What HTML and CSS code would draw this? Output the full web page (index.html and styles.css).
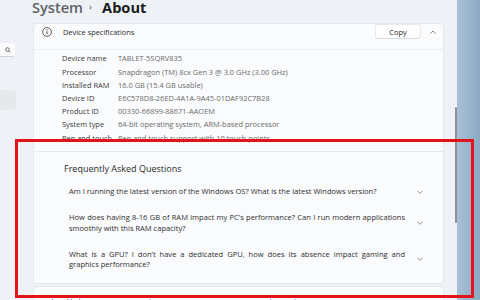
FILE: index.html
```html
<!DOCTYPE html>
<html lang="en">
<head>
<meta charset="utf-8">
<title>System › About</title>
<link rel="stylesheet" href="styles.css">
</head>
<body>
<div class="screen">
  <aside class="side">
    <div class="search">
      <svg width="6" height="6" viewBox="0 0 6 6"><circle cx="2.5" cy="2.5" r="1.8" fill="none" stroke="#555" stroke-width="0.8"/><line x1="3.8" y1="3.8" x2="5.5" y2="5.5" stroke="#555" stroke-width="0.8"/></svg>
    </div>
    <div class="nav-sel"></div>
  </aside>
  <main class="main">
    <div class="content">
      <h1 class="title"><span class="crumb">System</span><span class="sep">›</span><span class="page">About</span></h1>
      <section class="card">
        <div class="card-head">
          <svg class="info" width="10" height="10" viewBox="0 0 10 10"><circle cx="5" cy="5" r="4.4" fill="none" stroke="#3a3a3a" stroke-width="0.8"/><line x1="5" y1="4.3" x2="5" y2="7.4" stroke="#3a3a3a" stroke-width="0.9"/><circle cx="5" cy="2.9" r="0.55" fill="#3a3a3a"/></svg>
          <span class="head-title">Device specifications</span>
          <button class="copy">Copy</button>
          <svg class="chev-up" width="6" height="4" viewBox="0 0 6 4"><polyline points="0.5,3.5 3,1 5.5,3.5" fill="none" stroke="#666" stroke-width="0.8"/></svg>
        </div>
        <dl class="specs">
          <div class="row"><dt>Device name</dt><dd>TABLET-5SQRV835</dd></div>
          <div class="row"><dt>Processor</dt><dd>Snapdragon (TM) 8cx Gen 3 @ 3.0 GHz (3.00 GHz)</dd></div>
          <div class="row"><dt>Installed RAM</dt><dd>16.0 GB (15.4 GB usable)</dd></div>
          <div class="row"><dt>Device ID</dt><dd>E6C578D8-26ED-4A1A-9A45-01DAF92C7B28</dd></div>
          <div class="row"><dt>Product ID</dt><dd>00330-66899-88671-AAOEM</dd></div>
          <div class="row"><dt>System type</dt><dd>64-bit operating system, ARM-based processor</dd></div>
          <div class="row"><dt>Pen and touch</dt><dd>Pen and touch support with 10 touch points</dd></div>
        </dl>
        <div class="faq">
          <h2 class="faq-title">Frequently Asked Questions</h2>
          <div class="q">
            <p class="q-text"><span class="ln">Am I running the latest version of the Windows OS? What is the latest Windows version?</span></p>
            <svg class="chev" width="6" height="4" viewBox="0 0 6 4"><polyline points="0.5,0.8 3,3.3 5.5,0.8" fill="none" stroke="#777" stroke-width="0.8"/></svg>
          </div>
          <div class="q">
            <p class="q-text"><span class="ln j">How does having 8-16 GB of RAM impact my PC’s performance? Can I run modern applications</span><span class="ln">smoothly with this RAM capacity?</span></p>
            <svg class="chev" width="6" height="4" viewBox="0 0 6 4"><polyline points="0.5,0.8 3,3.3 5.5,0.8" fill="none" stroke="#777" stroke-width="0.8"/></svg>
          </div>
          <div class="q">
            <p class="q-text"><span class="ln j">What is a GPU? I don’t have a dedicated GPU, how does its absence impact gaming and</span><span class="ln">graphics performance?</span></p>
            <svg class="chev" width="6" height="4" viewBox="0 0 6 4"><polyline points="0.5,0.8 3,3.3 5.5,0.8" fill="none" stroke="#777" stroke-width="0.8"/></svg>
          </div>
        </div>
      </section>
      <section class="card links">
        <span class="links-label">Related links</span>
        <a class="link">Domain or workgroup</a>
        <a class="link">System protection</a>
        <a class="link">Advanced system settings</a>
      </section>
    </div>
    <div class="gutter"><div class="thumb"></div></div>
  </main>
  <div class="desktop"></div>
  <div class="highlight"></div>
</div>
</body>
</html>
```

FILE: styles.css
```css
* { box-sizing: border-box; }
html, body { margin: 0; padding: 0; }
body {
  font-family: "Open Sans", "Noto Sans", sans-serif;
  color: #333;
  background: #eef2f6;
}
.screen {
  position: relative;
  width: 480px;
  height: 300px;
  overflow: hidden;
  display: flex;
  background: #eef2f6;
}

/* sidebar */
.side {
  width: 33px;
  flex: none;
  background: #eef1f5;
  padding-top: 43px;
}
.search {
  width: 15px;
  height: 14px;
  background: #fbfbfc;
  border-radius: 0 3px 3px 0;
  border-bottom: 1px solid #cfd3d8;
  display: flex;
  align-items: center;
  justify-content: center;
}
.nav-sel {
  margin-top: 33px;
  width: 16px;
  height: 20px;
  background: #e6e8ec;
  border-radius: 0 3px 3px 0;
}

/* main */
.main {
  width: 424px;
  flex: none;
  display: flex;
}
.content {
  width: 411px;
  flex: none;
}
.gutter { width: 13px; flex: none; }
.thumb {
  margin: 107px 0 0 11px;
  width: 1.5px;
  height: 116px;
  background: #8e9298;
  border-radius: 1px;
}
.desktop {
  flex: 1;
  background: linear-gradient(90deg, #a8c0d5, #8caac5);
}

/* title */
.title {
  margin: -1px 0 8px -1px;
  height: 16px;
  line-height: 16px;
  font-size: 14.6px;
  font-weight: 600;
  white-space: nowrap;
}
.crumb { color: #5f6368; }
.sep { color: #777; font-size: 9px; margin: 0 10px 0 6px; vertical-align: 3px; }
.page { color: #1b1b1b; font-weight: 700; }

/* card */
.card {
  background: #fafbfc;
  border: 1px solid #e4e7eb;
  border-radius: 4px;
}
.card-head {
  height: 26px;
  display: flex;
  align-items: center;
  padding: 0 7px 10px 8px;
  border-bottom: 1px solid #eaecef;
}
.info { flex: none; }
.head-title {
  margin-left: 11px;
  font-size: 7.4px;
  color: #2b2b2b;
}
.copy {
  margin-left: auto;
  width: 46px;
  height: 15px;
  padding: 0;
  background: #ffffff;
  border: 1px solid #e8eaed;
  border-bottom-color: #d9dce0;
  border-radius: 3px;
  font-family: inherit;
  font-size: 7.4px;
  color: #222;
}
.chev-up { margin-left: 9px; flex: none; }

.specs {
  margin: 0;
  padding: 2.4px 0 6px 28px;
}
.row {
  display: flex;
  height: 13.2px;
  line-height: 13.2px;
  font-size: 7.45px;
  white-space: nowrap;
}
.row dt { width: 56px; color: #3a3a3a; }
.row dd { margin: 0; color: #6b6b6b; }

.faq {
  border-top: 1px solid #e8ebee;
  padding: 11px 0 13px 30px;
}
.faq-title {
  margin: 0 0 11.6px;
  font-size: 9px;
  line-height: 12px;
  font-weight: 400;
  color: #2b2b2b;
}
.q {
  display: flex;
  align-items: center;
  padding-left: 5px;
  margin-bottom: 15px;
}
.q:last-child { margin-bottom: 0; }
.q-text {
  margin: 0;
  width: 336px;
  font-size: 7.55px;
  line-height: 10.8px;
  color: #2e2e2e;
}
.ln { display: block; white-space: nowrap; }
.ln.j { text-align: justify; text-align-last: justify; white-space: normal; }
.chev { margin-left: 12px; flex: none; }

.links {
  margin-top: 2px;
  padding: 10px 0 0 9px;
  height: 30px;
  font-size: 7.3px;
  white-space: nowrap;
}
.links-label { color: #333; margin-right: 10px; }
.link { color: #3a5a8a; margin-right: 12px; }

/* red highlight box overlaying the screenshot */
.highlight {
  position: absolute;
  left: 15px;
  top: 139px;
  width: 459px;
  height: 159px;
  border: 3px solid #e3131b;
  pointer-events: none;
}
```
